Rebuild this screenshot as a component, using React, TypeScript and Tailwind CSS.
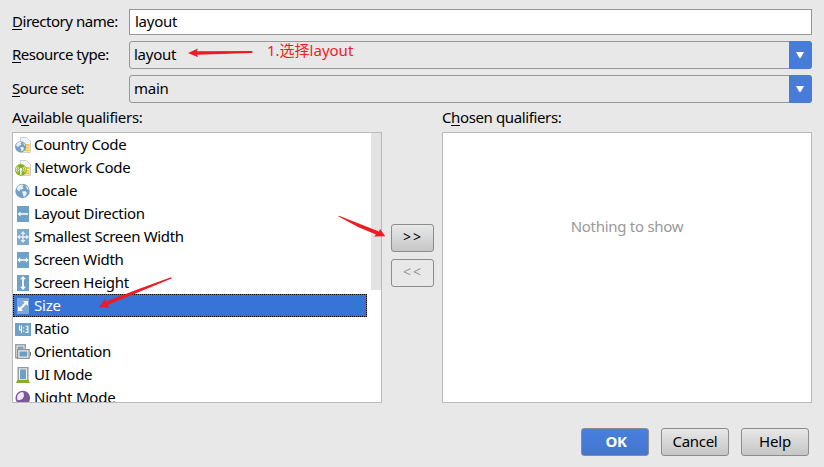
import React from "react";

type IconName =
  | "country" | "network" | "locale" | "direction" | "smallest" | "width"
  | "height" | "size" | "ratio" | "orientation" | "ui" | "night";

const qualifiers: { name: string; icon: IconName; spacing: string }[] = [
  { name: "Country Code", icon: "country", spacing: "tracking-[-0.35px]" },
  { name: "Network Code", icon: "network", spacing: "tracking-[-0.35px]" },
  { name: "Locale", icon: "locale", spacing: "tracking-[-0.3px]" },
  { name: "Layout Direction", icon: "direction", spacing: "tracking-[-0.3px]" },
  { name: "Smallest Screen Width", icon: "smallest", spacing: "tracking-[-0.32px]" },
  { name: "Screen Width", icon: "width", spacing: "tracking-[-0.3px]" },
  { name: "Screen Height", icon: "height", spacing: "tracking-[-0.3px]" },
  { name: "Size", icon: "size", spacing: "tracking-[-0.2px]" },
  { name: "Ratio", icon: "ratio", spacing: "tracking-[-0.2px]" },
  { name: "Orientation", icon: "orientation", spacing: "tracking-[-0.38px]" },
  { name: "UI Mode", icon: "ui", spacing: "tracking-[-0.3px]" },
  { name: "Night Mode", icon: "night", spacing: "tracking-[-0.2px]" },
];

function Globe() {
  return (
    <>
      <circle cx="7.5" cy="8" r="7.2" fill="#739fc5" />
      <path d="M1.6 5.2 L3.4 2.8 L6.4 1.4 L8.6 2 L7.6 4 L8.6 5.4 L6.6 6.6 L5 6.6 L4.6 8.6 L2.8 7.6 Z" fill="#e6eff6" />
      <path d="M7 8.4 L10 8 L12 9.8 L10.8 12.4 L8.8 14 L8 11.4 Z" fill="#e6eff6" />
      <path d="M10.4 2.6 L12.6 4 L13.8 6.6 L12 6.4 Z" fill="#dbe8f2" />
    </>
  );
}

function SimCard() {
  return (
    <>
      <path d="M5.5 .5 H11.5 L15.5 4.5 V15.5 H5.5 Z" fill="#f4f4f4" stroke="#cfcfcf" />
      <path d="M10 7 H14.6 V14.4 H10 Z" fill="#f6c93a" />
      <path d="M10 9.5 H14.6 M10 12 H14.6" stroke="#fff3c8" strokeWidth=".8" />
    </>
  );
}

function Icon({ name }: { name: IconName }) {
  const blue = "#6fa0c6";
  return (
    <svg width="16" height="16" viewBox="0 0 16 16" className="block shrink-0">
      {name === "country" && (
        <>
          <SimCard />
          <g transform="translate(-.2 3.6) scale(.78)"><Globe /></g>
        </>
      )}
      {name === "network" && (
        <>
          <SimCard />
          <circle cx="5.9" cy="9.9" r="5.9" fill="#86ad22" />
          <path d="M5.9 9.5 V14.8" stroke="#fff" strokeWidth="1.4" />
          <circle cx="5.9" cy="9.2" r="1.2" fill="#fff" />
          <path d="M4 11.5 A3 3 0 0 1 4 7.1 M7.8 11.5 A3 3 0 0 0 7.8 7.1 M2.4 12.4 A4.6 4.6 0 0 1 2.4 6.3 M9.4 12.4 A4.6 4.6 0 0 0 9.4 6.3" fill="none" stroke="#f0f6da" strokeWidth=".9" />
        </>
      )}
      {name === "locale" && <Globe />}
      {name === "direction" && (
        <>
          <rect x="2" width="12" height="16" fill={blue} />
          <path d="M2.6 8 L5.4 5.4 V7.2 H13 V8.8 H5.4 V10.6 Z" fill="#fff" />
        </>
      )}
      {name === "smallest" && (
        <>
          <rect x="2" width="12" height="16" fill="#7ea9cc" />
          <path d="M8 2 L10.6 5 H8.7 V7.3 H11 V5.4 L14 8 L11 10.6 V8.7 H8.7 V11 H10.6 L8 14 L5.4 11 H7.3 V8.7 H5 V10.6 L2 8 L5 5.4 V7.3 H7.3 V5 H5.4 Z" fill="#e4eef6" />
        </>
      )}
      {name === "width" && (
        <>
          <rect x="2" width="12" height="16" fill={blue} />
          <path d="M2.3 8 L5.2 5.2 V7.2 H10.8 V5.2 L13.7 8 L10.8 10.8 V8.8 H5.2 V10.8 Z" fill="#fff" />
        </>
      )}
      {name === "height" && (
        <>
          <rect x="2" width="12" height="16" fill={blue} />
          <path d="M8 1 L11 4.2 H8.9 V11.8 H11 L8 15 L5 11.8 H7.1 V4.2 H5 Z" fill="#fff" />
        </>
      )}
      {name === "size" && (
        <>
          <rect x="2" width="12" height="16" fill="#7caad2" />
          <path d="M8 3 H13 V8 L11.3 6.3 L6.3 11.3 L8 13 H3 V8 L4.7 9.7 L9.7 4.7 Z" fill="#fff" />
        </>
      )}
      {name === "ratio" && (
        <>
          <rect y="2" width="16" height="13" fill={blue} />
          <path d="M4.5 4.6 V9 H7 M6.5 4.6 V12 M10.6 5.2 H12.9 V11.4 H10.6 M11 8.3 H12.9" fill="none" stroke="#fff" strokeWidth="1.1" />
          <path d="M8.2 6.2 h1.1 v1.3 h-1.1z M8.2 9.4 h1.1 v1.3 h-1.1z" fill="#fff" />
        </>
      )}
      {name === "orientation" && (
        <>
          <rect x=".8" y=".8" width="9.4" height="13" fill="#fff" stroke="#949696" strokeWidth="1.4" />
          <rect x="2.4" y="2.4" width="6.2" height="3" fill="#76a5c9" />
          <rect x="2.7" y="5.7" width="11.4" height="8.6" fill="#fff" stroke="#949696" strokeWidth="1.4" />
          <rect x="4.4" y="7.4" width="8" height="5.2" fill="#6c9dc2" />
          <path d="M15.5 8 V12" stroke="#777" />
        </>
      )}
      {name === "ui" && (
        <>
          <rect x="3.2" y=".7" width="9.6" height="13" fill="#fff" stroke="#949696" strokeWidth="1.4" />
          <rect x="4.9" y="2.3" width="6.2" height="9.8" fill={blue} />
          <path d="M2.5 12.8 H13.4 L15 16 H1 Z" fill="#86ab30" />
        </>
      )}
      {name === "night" && (
        <>
          <circle cx="7.8" cy="8" r="7.3" fill="#7a579c" />
          <path d="M8.6 2 A5.6 5.6 0 1 1 2.6 10 A7 7 0 0 0 9.4 7.2 A6 6 0 0 0 8.6 2 Z" fill="#7a579c" />
          <path d="M8 2 C10.5 6 8 10.5 2.6 10.2 C.8 6 3.4 2 8 2 Z" fill="#eee6f3" />
        </>
      )}
    </svg>
  );
}

function Combo({ value }: { value: string }) {
  return (
    <div className="flex h-7 w-[683px] overflow-hidden rounded-[3px]">
      <div className="flex flex-1 items-center rounded-l-[3px] border border-r-0 border-[#979797] pb-0.5 pl-1">
        <span className="tracking-[-0.25px]">{value}</span>
      </div>
      <div className="flex w-[23px] items-center justify-center bg-[#477dd9]">
        <svg width="8" height="6" viewBox="0 0 8 6" className="mr-px"><path d="M0 0 H8 L4.6 6 H3.4 Z" fill="#fff" /></svg>
      </div>
    </div>
  );
}

function Mnemonic({ before = "", letter, after, className }: { before?: string; letter: string; after: string; className: string }) {
  return (
    <span className={`whitespace-nowrap ${className}`}>
      {before}
      <span className="inline-block h-[17px] border-b border-black leading-[17px]">{letter}</span>
      {after}
    </span>
  );
}

const pushButton = "flex h-7 items-center justify-center rounded-[3px] border border-[#8c8c8c] pb-0.5";

export default function App() {
  return (
    <div className="relative h-[467px] w-[824px] overflow-hidden bg-[#e8e8e8] pl-3 pt-[9px] font-['Noto_Sans','Noto_Sans_CJK_SC',sans-serif] text-[15px] leading-[22px] text-black">
      <div className="flex h-[26px] items-center">
        <Mnemonic letter="D" after="irectory name:" className="w-[117px] pb-0.5 tracking-[-0.47px]" />
        <div className="flex h-[26px] w-[683px] items-center border border-[#979797] bg-white pb-0.5 pl-[5px]">
          <span className="tracking-[-0.25px]">layout</span>
        </div>
      </div>
      <div className="mt-1.5 flex items-center">
        <Mnemonic letter="R" after="esource type:" className="w-[117px] pb-0.5 tracking-[-0.49px]" />
        <Combo value="layout" />
      </div>
      <div className="mt-1.5 flex items-center">
        <Mnemonic letter="S" after="ource set:" className="w-[117px] pb-0.5 tracking-[-0.45px]" />
        <Combo value="main" />
      </div>

      <div className="flex">
        <div className="w-[370px]">
          <div className="flex h-[29px] items-center pb-0.5">
            <Mnemonic before="A" letter="v" after="ailable qualifiers:" className="tracking-[-0.3px]" />
          </div>
          <div className="flex h-[271px] overflow-hidden border border-[#bababa] bg-white">
            <div className="w-[354px]">
              {qualifiers.map((q) => (
                <div
                  key={q.name}
                  className={`flex h-[23px] items-center pl-0.5 ${q.name === "Size" ? "bg-[#3874d8] text-white outline-1 -outline-offset-1 outline-dotted outline-black" : ""}`}
                >
                  <Icon name={q.icon} />
                  <span className={`ml-[3px] whitespace-nowrap pb-0.5 ${q.spacing}`}>{q.name}</span>
                </div>
              ))}
            </div>
            <div className="ml-1 h-[157px] flex-1 bg-[#e3e3e3]" />
          </div>
        </div>

        <div className="flex w-[60px] flex-col items-center gap-[7px] pt-[121px]">
          <button className={`${pushButton} w-[43px] bg-linear-to-b from-[#e8e8e8] to-[#c6c6c6] pl-0.5 text-[14px] tracking-[2px]`}>&gt;&gt;</button>
          <button className={`${pushButton} w-[43px] pl-0.5 text-[14px] tracking-[2px] text-[#999]`}>&lt;&lt;</button>
        </div>

        <div className="w-[370px]">
          <div className="flex h-[29px] items-center pb-0.5">
            <Mnemonic before="C" letter="h" after="osen qualifiers:" className="tracking-[-0.38px]" />
          </div>
          <div className="flex h-[271px] justify-center border border-[#bababa] bg-white pt-[82px] text-[#999]">
            <span className="tracking-[-0.28px]">Nothing to show</span>
          </div>
        </div>
      </div>

      <div className="mt-[25px] flex gap-3 pl-[569px]">
        <button className={`${pushButton} w-[68px] border-[#5b779f] bg-linear-to-b from-[#4880df] to-[#4275cd] pl-0.5 font-bold tracking-[-0.4px] text-white`}>OK</button>
        <button className={`${pushButton} w-[68px] bg-linear-to-b from-[#e8e8e8] to-[#c6c6c6] tracking-[-0.3px]`}>Cancel</button>
        <button className={`${pushButton} w-[68px] bg-linear-to-b from-[#e8e8e8] to-[#c6c6c6] tracking-[-0.2px]`}>Help</button>
      </div>

      <span className="absolute left-[267px] top-[39px] whitespace-nowrap text-[15px] text-[#ed1c24]">1.选择layout</span>
      <svg className="pointer-events-none absolute left-0 top-0" width="824" height="467" viewBox="0 0 824 467" fill="#ed1c24">
        <path d="M188 53 L198 48.5 L196.8 51.2 L252 51 Q253.5 52 252 53 L197 54.8 L198 57.2 Z" />
        <path d="M338.2 216.2 L339 215.8 L379 231.5 L380 229 L385.3 236.2 L374 236.6 L376 234.6 L358 227 Z" />
        <path d="M171 277.3 L171.6 278.6 L107.5 305 L109.3 307.7 L99 307 L105.5 298.5 L105.8 301.6 L140 288.5 Z" />
      </svg>
    </div>
  );
}
